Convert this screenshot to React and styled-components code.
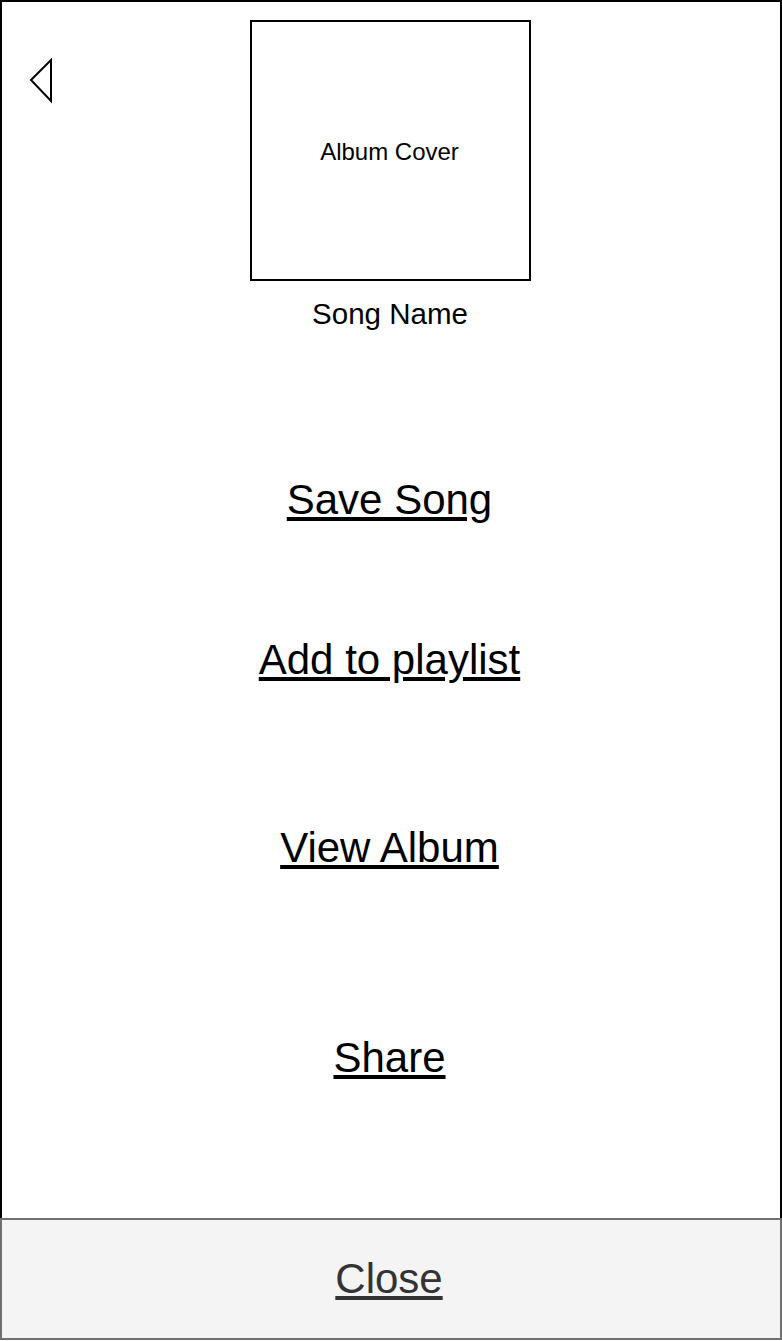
import styled, { createGlobalStyle } from 'styled-components';

const GlobalStyle = createGlobalStyle`
    html, body {
        margin: 0;
        padding: 0;
        background: #fff;
    }
    body {
        font-family: "Liberation Sans", Arial, Helvetica, sans-serif;
    }
`;

export default function App() {
    return (
        <Page>
            <GlobalStyle />
            <Main>
                <Header>
                    <BackButton aria-label="Back">
                        <svg width="26" height="46" viewBox="0 0 26 46">
                            <polygon
                                points="2,22 22,2 22,43"
                                fill="none"
                                stroke="#000"
                                strokeWidth="2"
                            />
                        </svg>
                    </BackButton>
                    <Cover>Album Cover</Cover>
                </Header>
                <SongName>Song Name</SongName>
                <Menu>
                    <MenuLink href="#" $top={145}>Save Song</MenuLink>
                    <MenuLink href="#" $top={112}>Add to playlist</MenuLink>
                    <MenuLink href="#" $top={140}>View Album</MenuLink>
                    <MenuLink href="#" $top={162}>Share</MenuLink>
                </Menu>
            </Main>
            <CloseBar>
                <CloseLink href="#">Close</CloseLink>
            </CloseBar>
        </Page>
    );
}

const Page = styled.div`
    width: 782px;
    height: 1341px;
    display: flex;
    flex-direction: column;
    box-sizing: border-box;
    padding-bottom: 1px;
`;

const Main = styled.div`
    height: 1218px;
    box-sizing: border-box;
    border: 2px solid #000;
    border-bottom: none;
    padding-top: 18px;
    display: flex;
    flex-direction: column;
    align-items: center;
`;

const Header = styled.div`
    width: 100%;
    display: grid;
    grid-template-columns: 1fr 281px 1fr;
    margin-left: -1px;
`;

const BackButton = styled.button`
    justify-self: start;
    align-self: start;
    margin: 38px 0 0 27px;
    padding: 0;
    border: none;
    background: none;
    line-height: 0;
    cursor: pointer;
`;

const Cover = styled.div`
    grid-column: 2;
    width: 281px;
    height: 261px;
    box-sizing: border-box;
    border: 2px solid #000;
    display: flex;
    align-items: center;
    justify-content: center;
    font-size: 24px;
    color: #000;
    padding: 3px 2px 0 0;
`;

const SongName = styled.div`
    margin: 16px 2px 0 0;
    font-size: 29.5px;
    line-height: 34px;
    color: #000;
`;

const Menu = styled.nav`
    display: flex;
    flex-direction: column;
    align-items: center;
    margin-right: 3px;
`;

const MenuLink = styled.a`
    margin-top: ${(p) => p.$top}px;
    font-size: 42px;
    line-height: 48px;
    color: #000;
    text-decoration: underline;
`;

const CloseBar = styled.div`
    height: 122px;
    box-sizing: border-box;
    border: 2px solid #707070;
    background: #f4f4f4;
    display: flex;
    align-items: center;
    justify-content: center;
`;

const CloseLink = styled.a`
    font-size: 42px;
    line-height: 48px;
    color: #333;
    text-decoration: underline;
    margin-right: 4px;
`;
